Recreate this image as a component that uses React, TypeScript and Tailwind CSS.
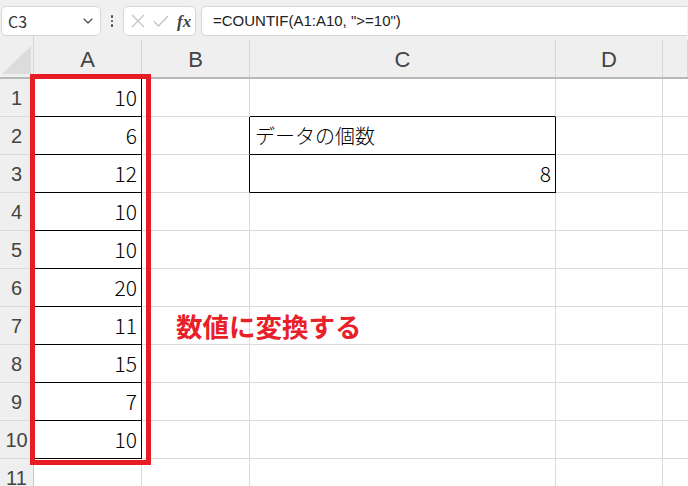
import { ChevronDown } from "lucide-react";

const values = [10, 6, 12, 10, 10, 20, 11, 15, 7, 10];
const cols = ["A", "B", "C", "D", ""];

function Toolbar() {
  return (
    <div className="flex h-[36px] items-end gap-0 px-[1px] pb-0 pt-[6px]">
      <div className="flex h-[30px] w-[100px] items-center justify-between rounded-[5px] border border-[#d6d6d6] bg-white pl-[6px] pr-[4px] text-[16px] text-[#333]">
        <span>C3</span>
        <ChevronDown className="h-[16px] w-[16px] text-[#444]" strokeWidth={1.6} />
      </div>
      <div className="flex h-[30px] w-[22px] flex-col items-center justify-center gap-[2px]">
        <span className="h-[2.5px] w-[2.5px] rounded-full bg-[#444]" />
        <span className="h-[2.5px] w-[2.5px] rounded-full bg-[#444]" />
        <span className="h-[2.5px] w-[2.5px] rounded-full bg-[#444]" />
      </div>
      <div className="flex h-[30px] w-[73px] items-center gap-[8px] rounded-[5px] border border-[#d6d6d6] bg-white pl-[7px]">
        <svg width="14" height="14" viewBox="0 0 14 14" className="text-[#c4c4c4]">
          <path d="M1 1 L13 13 M13 1 L1 13" stroke="currentColor" strokeWidth="1.3" fill="none" />
        </svg>
        <svg width="16" height="14" viewBox="0 0 16 14" className="text-[#c4c4c4]">
          <path d="M1 7.5 L5.5 12 L15 2" stroke="currentColor" strokeWidth="1.3" fill="none" />
        </svg>
        <span className="font-['Liberation_Serif',serif] text-[17px] font-bold italic leading-none text-[#444]">
          fx
        </span>
      </div>
      <div className="ml-[5px] flex h-[30px] flex-1 items-center rounded-l-[5px] border border-r-0 border-[#d6d6d6] bg-white pl-[11px] font-['Liberation_Sans',sans-serif] text-[15px] text-[#222]">
        =COUNTIF(A1:A10, "&gt;=10")
      </div>
    </div>
  );
}

export default function App() {
  return (
    <div className="relative h-[486px] w-[688px] overflow-hidden bg-[#f0f0f0] font-['Noto_Sans_CJK_JP',sans-serif]">
      <Toolbar />
      <div className="grid grid-cols-[34px_108px_108px_306px_107px_1fr] grid-rows-[43px] auto-rows-[38px]">
        {/* header row */}
        <div className="flex items-end justify-end border-b-2 border-r border-[#b8b8b8] border-r-[#d6d6d6] bg-[#efefef] pb-[3px] pr-[2px]">
          <div className="h-0 w-0 border-b-[28px] border-l-[29px] border-b-[#dcdcdc] border-l-transparent" />
        </div>
        {cols.map((c, i) => (
          <div
            key={i}
            className="flex items-center justify-center border-b-2 border-b-[#b8b8b8] bg-[#efefef] pt-[6px] font-['Liberation_Sans',sans-serif] text-[22px] text-[#444]"
          >
            <span className="flex-1 text-center">{c}</span>
            <span className="h-[37px] w-px self-end bg-[#d6d6d6]" />
          </div>
        ))}
        {Array.from({ length: 11 }).map((_, r) => {
          const row = r + 1;
          const v = values[r];
          return [
            <div
              key={`h${row}`}
              className="flex items-center justify-center border-b border-r border-b-[#dadada] border-r-[#c8c8c8] bg-[#efefef] font-['Liberation_Sans',sans-serif] text-[20px] text-[#444]"
            >
              {row}
            </div>,
            <div
              key={`a${row}`}
              className={
                v !== undefined
                  ? "flex items-center justify-end border-b border-r border-black bg-white pr-[4px] text-[21px] font-light text-black"
                  : "border-b border-r border-[#dadada] bg-white"
              }
            >
              {v}
            </div>,
            <div
              key={`b${row}`}
              className={
                "relative flex items-center overflow-visible border-b bg-white border-b-[#dadada] " +
                (row === 2 || row === 3 ? "border-r border-r-black" : "border-r border-r-[#dadada]")
              }
            >
              {row === 7 && (
                <span className="relative z-10 whitespace-nowrap pl-[34px] text-[26.5px] font-bold text-[#e8202a]">
                  数値に変換する
                </span>
              )}
            </div>,
            <div
              key={`c${row}`}
              className={
                "flex items-center bg-white text-[20px] font-light text-black " +
                (row <= 3 ? "border-b border-b-black " : "border-b border-b-[#dadada] ") +
                (row === 2 || row === 3 ? "border-r border-r-black " : "border-r border-r-[#dadada] ") +
                (row === 3 ? "justify-end pr-[4px] text-[21px]" : "pl-[5px]")
              }
            >
              {row === 2 && "データの個数"}
              {row === 3 && "8"}
            </div>,
            <div key={`d${row}`} className="border-b border-r border-[#dadada] bg-white" />,
            <div key={`e${row}`} className="border-b border-[#dadada] bg-white" />,
          ];
        })}
      </div>
      <div className="pointer-events-none absolute left-[30px] top-[74px] h-[391px] w-[121px] border-[5px] border-[#e81c24]" />
    </div>
  );
}
